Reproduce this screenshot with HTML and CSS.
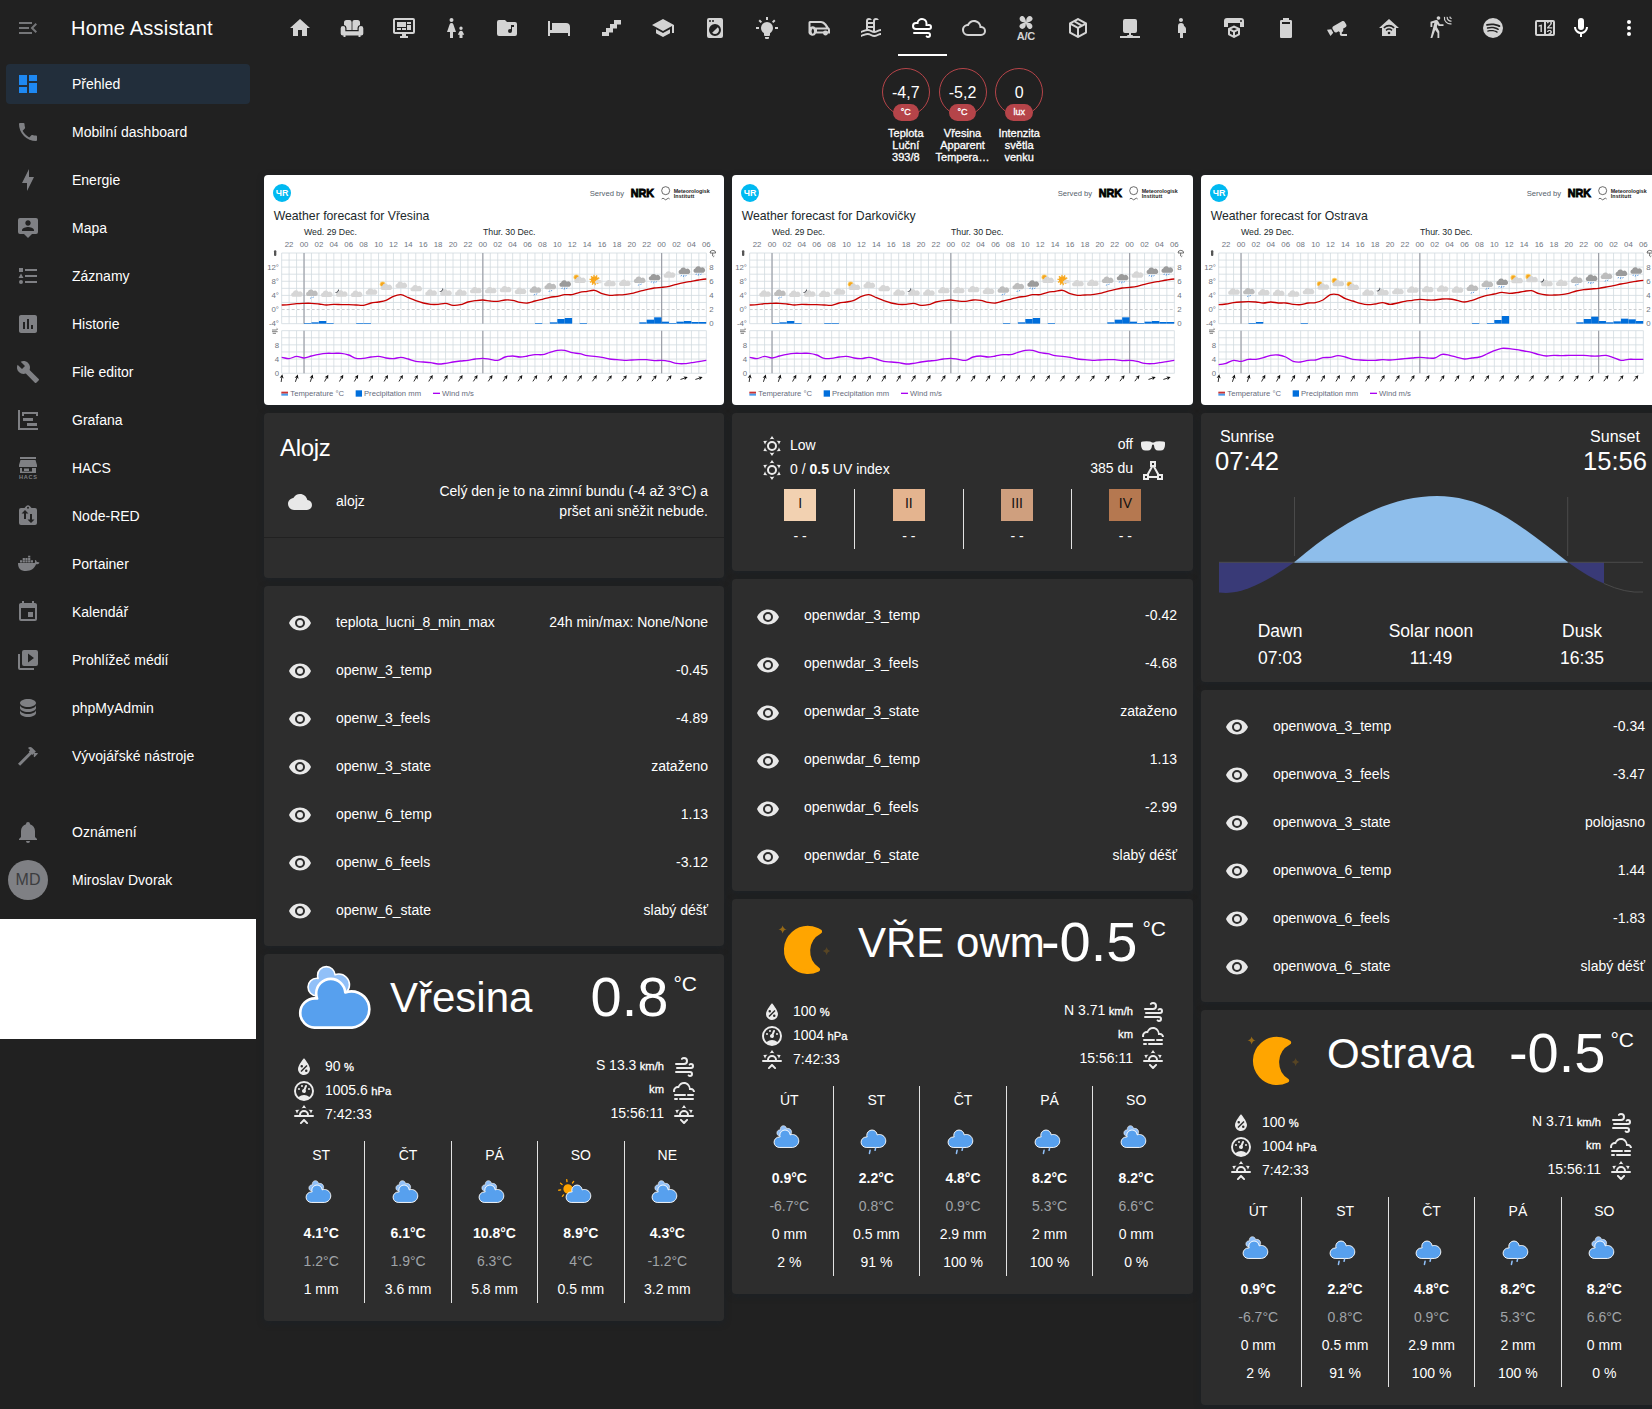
FILE: index.html
```html
<!DOCTYPE html>
<html lang="cs">
<head>
<meta charset="utf-8">
<title>Home Assistant</title>
<link rel="stylesheet" href="styles.css">
</head>
<body>
<svg class="sprite" aria-hidden="true">
<symbol id="menu" viewBox="0 0 24 24"><path d="M21,15.61L19.59,17L14.58,12L19.59,7L21,8.39L17.44,12L21,15.61M3,6H16V8H3V6M3,13V11H13V13H3M3,18V16H16V18H3Z"/></symbol>
<symbol id="dashboard" viewBox="0 0 24 24"><path d="M13,3V9H21V3M13,21H21V11H13M3,21H11V15H3M3,13H11V3H3V13Z"/></symbol>
<symbol id="phone" viewBox="0 0 24 24"><path d="M6.62,10.79C8.06,13.62 10.38,15.94 13.21,17.38L15.41,15.18C15.69,14.9 16.08,14.82 16.43,14.93C17.55,15.3 18.75,15.5 20,15.5A1,1 0 0,1 21,16.5V20A1,1 0 0,1 20,21A17,17 0 0,1 3,4A1,1 0 0,1 4,3H7.5A1,1 0 0,1 8.5,4C8.5,5.25 8.7,6.45 9.07,7.57C9.18,7.92 9.1,8.31 8.82,8.59L6.62,10.79Z"/></symbol>
<symbol id="bolt" viewBox="0 0 24 24"><path d="M11 15H6L13 1V9H18L11 23V15Z"/></symbol>
<symbol id="map" viewBox="0 0 24 24"><path d="M20,2H4A2,2 0 0,0 2,4V16A2,2 0 0,0 4,18H8L12,22L16,18H20A2,2 0 0,0 22,16V4A2,2 0 0,0 20,2M12,4.3C13.5,4.3 14.7,5.5 14.7,7C14.7,8.5 13.5,9.7 12,9.7C10.5,9.7 9.3,8.5 9.3,7C9.3,5.5 10.5,4.3 12,4.3M18,15H6V14.1C6,12.1 10,11 12,11C14,11 18,12.1 18,14.1V15Z"/></symbol>
<symbol id="logbook" viewBox="0 0 24 24"><path d="M5,9.5L7.5,14H2.5L5,9.5M3,4H7V8H3V4M5,20A2,2 0 0,0 7,18A2,2 0 0,0 5,16A2,2 0 0,0 3,18A2,2 0 0,0 5,20M9,5V7H21V5H9M9,19H21V17H9V19M9,13H21V11H9V13Z"/></symbol>
<symbol id="history" viewBox="0 0 24 24"><path d="M19,3H5C3.9,3 3,3.9 3,5V19C3,20.1 3.9,21 5,21H19C20.1,21 21,20.1 21,19V5C21,3.9 20.1,3 19,3M9,17H7V10H9V17M13,17H11V7H13V17M17,17H15V13H17V17Z" fill-rule="evenodd"/></symbol>
<symbol id="wrench" viewBox="0 0 24 24"><path d="M22.7,19L13.6,9.9C14.5,7.6 14,4.9 12.1,3C10.1,1 7.1,0.6 4.7,1.7L9,6L6,9L1.6,4.7C0.4,7.1 0.9,10.1 2.9,12.1C4.8,14 7.5,14.5 9.8,13.6L18.9,22.7C19.3,23.1 19.9,23.1 20.3,22.7L22.6,20.4C23.1,20 23.1,19.3 22.7,19Z"/></symbol>
<symbol id="grafana" viewBox="0 0 24 24"><path d="M2,2H4V20H22V22H2V2M7,10H17V13H7V10M11,15H21V18H11V15M6,4H22V8H20V6H8V8H6V4Z"/></symbol>
<symbol id="hacs" viewBox="0 0 24 24"><path d="M4 1H20V3H4zM4.5 4H19.5L21 9V11H3V9zM4 12H6V15.5H18V12H20V17H4zM8 12.5H13V15H8zM16 12H18V16H16z"/><text x="12" y="23" font-size="5.6" font-weight="bold" text-anchor="middle" textLength="18">HACS</text></symbol>
<symbol id="nodered" viewBox="0 0 24 24"><path fill-rule="evenodd" d="M5 4H8.5L10 2.2A3 3 0 0 1 14 2.2L15.500 4H19A2 2 0 0 1 21 6V19A2 2 0 0 1 19 21H5A2 2 0 0 1 3 19V6A2 2 0 0 1 5 4M12 2.800A1 1 0 0 0 12 4.800A1 1 0 0 0 12 2.800M9 6L5.500 9.500H8V15H10V9.500H12.500zM14 10V15.500H11.500L15 19L18.500 15.500H16V10z"/></symbol>
<symbol id="docker" viewBox="0 0 24 24"><path d="M2 11H18.500C19.300 10.500 19.300 9.500 18.800 8.500L19.500 8C20.500 8.700 20.800 9.500 20.800 10.200C22 10 23 10.200 23.500 10.700C22.800 12 21.500 12.400 20 12.300C18.500 16.500 15 19 10 19C4.500 19 2 16.500 2 11zM4 8.300H6.200V10.400H4zM6.700 8.300H8.900V10.400H6.700zM9.400 8.300H11.600V10.400H9.400zM12.100 8.300H14.300V10.400H12.100zM14.800 8.300H17V10.400H14.800zM6.700 6H8.900V8H6.700zM9.400 6H11.600V8H9.400zM12.100 6H14.300V8H12.100zM12.100 3.700H14.300V5.600H12.100z"/></symbol>
<symbol id="calendar" viewBox="0 0 24 24"><path d="M19,19H5V8H19M16,1V3H8V1H6V3H5C3.89,3 3,3.89 3,5V19A2,2 0 0,0 5,21H19A2,2 0 0,0 21,19V5C21,3.89 20.1,3 19,3H18V1M17,12H12V17H17V12Z"/></symbol>
<symbol id="media" viewBox="0 0 24 24"><path d="M4,6H2V20A2,2 0 0,0 4,22H18V20H4V6M20,2H8A2,2 0 0,0 6,4V16A2,2 0 0,0 8,18H20A2,2 0 0,0 22,16V4A2,2 0 0,0 20,2M12,14.5V5.5L18,10L12,14.5Z"/></symbol>
<symbol id="database" viewBox="0 0 24 24"><path d="M12,3C7.58,3 4,4.79 4,7C4,9.21 7.58,11 12,11C16.42,11 20,9.21 20,7C20,4.79 16.42,3 12,3M4,9V12C4,14.21 7.58,16 12,16C16.42,16 20,14.21 20,12V9C20,11.21 16.42,13 12,13C7.58,13 4,11.21 4,9M4,14V17C4,19.21 7.58,21 12,21C16.42,21 20,19.21 20,17V14C20,16.21 16.42,18 12,18C7.58,18 4,16.21 4,14Z"/></symbol>
<symbol id="hammer" viewBox="0 0 24 24"><path d="M2,19.63L13.43,8.2L12.72,7.5L14.14,6.07L12,3.89C13.2,2.7 15.09,2.7 16.27,3.89L19.87,7.5L18.45,8.91H21.29L22,9.62L18.45,13.21L17.74,12.5V9.62L16.27,11.04L15.56,10.33L4.13,21.76L2,19.63Z"/></symbol>
<symbol id="bell" viewBox="0 0 24 24"><path d="M21,19V20H3V19L5,17V11C5,7.9 7.03,5.17 10,4.29C10,4.19 10,4.1 10,4A2,2 0 0,1 12,2A2,2 0 0,1 14,4C14,4.1 14,4.19 14,4.29C16.97,5.17 19,7.9 19,11V17L21,19M14,21A2,2 0 0,1 12,23A2,2 0 0,1 10,21"/></symbol>
<symbol id="home" viewBox="0 0 24 24"><path d="M10,20V14H14V20H19V12H22L12,3L2,12H5V20H10Z"/></symbol>
<symbol id="sofa" viewBox="0 0 24 24"><path d="M4 9V6.500A2.500 2.500 0 0 1 6.500 4H9.500Q11.600 4 11.600 6V14H6.500V12A3 3 0 0 0 4 9zM12.400 6Q12.400 4 14.500 4H17.500A2.500 2.500 0 0 1 20 6.500V9A3 3 0 0 0 17.500 12V14H12.400zM3 10A2.300 2.300 0 0 1 5.300 12.300V15.300H18.700V12.300A2.300 2.300 0 0 1 23.300 12.300V17.500A2 2 0 0 1 21.300 19.500H20.500V21H18.500V19.500H5.500V21H3.500V19.500H2.700A2 2 0 0 1 .7 17.500V12.300A2.300 2.300 0 0 1 3 10z"/></symbol>
<symbol id="monitor" viewBox="0 0 24 24"><path d="M21,16V4H3V16H21M21,2A2,2 0 0,1 23,4V16A2,2 0 0,1 21,18H14V20H16V22H8V20H10V18H3C1.89,18 1,17.1 1,16V4C1,2.89 1.89,2 3,2H21M5,6H14V11H5V6M15,6H19V8H15V6M19,9V14H15V9H19M5,12H9V14H5V12M10,12H14V14H10V12Z"/></symbol>
<symbol id="girls" viewBox="0 0 24 24"><path d="M7.500 2A2 2 0 1 1 7.500 6A2 2 0 1 1 7.500 2M6 22V16H3L5.600 8.400Q6.100 7 7.500 7Q8.900 7 9.400 8.400L12 16H9V22zM17 10.500A1.700 1.700 0 1 1 17 13.900A1.700 1.700 0 1 1 17 10.500M15.500 22V18.700H13.800L15.400 15.600Q15.900 14.700 17 14.700Q18.100 14.700 18.600 15.600L20.200 18.700H18.500V22z"/></symbol>
<symbol id="music" viewBox="0 0 24 24"><path fill-rule="evenodd" d="M20,6H12L10,4H4A2,2 0 0,0 2,6V18A2,2 0 0,0 4,20H20A2,2 0 0,0 22,18V8A2,2 0 0,0 20,6M19,11H17V15A2,2 0 0,1 15,17A2,2 0 0,1 13,15A2,2 0 0,1 15,13C15.36,13 15.7,13.1 16,13.28V9H19V11Z"/></symbol>
<symbol id="bed" viewBox="0 0 24 24"><path d="M19,7H5V14H3V5H1V20H3V17H21V20H23V11A4,4 0 0,0 19,7"/></symbol>
<symbol id="stairs" viewBox="0 0 24 24"><path d="M15,4V8H11V12H7V16H3V20H10V16.500H14V12.500H18V8.500H22V4H15Z"/></symbol>
<symbol id="school" viewBox="0 0 24 24"><path d="M12,3L1,9L12,15L21,10.09V17H23V9M5,13.18V17.18L12,21L19,17.18V13.18L12,17L5,13.18Z"/></symbol>
<symbol id="washer" viewBox="0 0 24 24"><path d="M14.83,11.17C16.39,12.73 16.39,15.26 14.83,16.83C13.27,18.39 10.74,18.39 9.17,16.83L14.83,11.17M6,2H18A2,2 0 0,1 20,4V20A2,2 0 0,1 18,22H6A2,2 0 0,1 4,20V4A2,2 0 0,1 6,2M7,4A1,1 0 0,0 6,5A1,1 0 0,0 7,6A1,1 0 0,0 8,5A1,1 0 0,0 7,4M10,4A1,1 0 0,0 9,5A1,1 0 0,0 10,6A1,1 0 0,0 11,5A1,1 0 0,0 10,4M12,8A6,6 0 0,0 6,14A6,6 0 0,0 12,20A6,6 0 0,0 18,14A6,6 0 0,0 12,8Z"/></symbol>
<symbol id="bulb" viewBox="0 0 24 24"><path d="M12,6A6,6 0 0,1 18,12C18,14.22 16.79,16.16 15,17.2V19A1,1 0 0,1 14,20H10A1,1 0 0,1 9,19V17.2C7.21,16.16 6,14.22 6,12A6,6 0 0,1 12,6M14,21V22A1,1 0 0,1 13,23H11A1,1 0 0,1 10,22V21H14M20,11H23V13H20V11M1,11H4V13H1V11M13,1V4H11V1H13M4.92,3.5L7.05,5.64L5.63,7.05L3.5,4.93L4.92,3.5M16.95,5.63L19.07,3.5L20.5,4.93L18.37,7.05L16.95,5.63Z"/></symbol>
<symbol id="van" viewBox="0 0 24 24"><path fill-rule="evenodd" d="M3 5H14C17 5 20 8 21.500 11.200Q23 12 23 14V17.500H21A2.600 2.600 0 0 1 16 17.500H9A4 4 0 0 1 1.500 15V6.500Q1.500 5 3 5M3.500 7V11Q6 9.500 8.500 11.500H19Q17 7.500 14 7zM5.800 12.500A2.700 3.200 0 0 0 5.800 17.900A2.700 3.200 0 0 0 5.800 12.500M10 13.500V15.500H16Q18.500 13.500 21 15.500V13.500z"/></symbol>
<symbol id="pool" viewBox="0 0 24 24"><path d="M2,15C3.67,14.25 5.33,13.5 7,13.17V5A3,3 0 0,1 10,2C11.31,2 12.42,2.83 12.83,4H10A1,1 0 0,0 9,5V6H14V5A3,3 0 0,1 17,2C18.31,2 19.42,2.83 19.83,4H17A1,1 0 0,0 16,5V14.94C18,14.62 20,13 22,13V15C19.78,15 17.56,17 15.33,17C13.11,17 10.89,15 8.67,15C6.44,15 4.22,16 2,17V15M14,8H9V10H14V8M14,12H9V13C10.67,13.16 12.33,14.31 14,14.79V12M2,19C4.22,18 6.44,17 8.67,17C10.89,17 13.11,19 15.33,19C17.56,19 19.78,17 22,17V19C19.78,19 17.56,21 15.33,21C13.11,21 10.89,19 8.67,19C6.44,19 4.22,20 2,21V19Z"/></symbol>
<symbol id="windycloud" viewBox="0 0 24 24"><path d="M6,6L6.69,6.06C7.32,3.72 9.46,2 12,2A5.5,5.5 0 0,1 17.5,7.5L17.42,8.45C17.88,8.16 18.42,8 19,8A3,3 0 0,1 22,11A3,3 0 0,1 19,14H6A4,4 0 0,1 2,10A4,4 0 0,1 6,6M6,8A2,2 0 0,0 4,10A2,2 0 0,0 6,12H19A1,1 0 0,0 20,11A1,1 0 0,0 19,10H15.5V7.5A3.5,3.5 0 0,0 12,4A3.5,3.5 0 0,0 8.5,7.5V8H6M18,18H4A1,1 0 0,1 3,17A1,1 0 0,1 4,16H18A3,3 0 0,1 21,19A3,3 0 0,1 18,22C17.17,22 16.42,21.66 15.88,21.12C15.5,20.73 15.5,20.1 15.88,19.71C16.27,19.32 16.9,19.32 17.29,19.71C17.47,19.89 17.72,20 18,20A1,1 0 0,0 19,19A1,1 0 0,0 18,18Z"/></symbol>
<symbol id="cloudline" viewBox="0 0 24 24"><path d="M19,18H6A4,4 0 0,1 2,14A4,4 0 0,1 6,10H6.71C7.37,7.69 9.5,6 12,6A5.5,5.5 0 0,1 17.5,11.5V12H19A3,3 0 0,1 22,15A3,3 0 0,1 19,18M19.35,10.03C18.67,6.59 15.64,4 12,4C9.11,4 6.6,5.64 5.35,8.03C2.34,8.36 0,10.9 0,14A6,6 0 0,0 6,20H19A5,5 0 0,0 24,15C24,12.36 21.95,10.22 19.35,10.03Z"/></symbol>
<symbol id="ac" viewBox="0 0 24 24"><g transform="translate(12,6.500)"><path id="blade" d="M-.8 -1C-4.500 -3 -4 -8 -.5 -8C3 -8 2 -3.500 .8 -1z" transform="rotate(-38)"/><use href="#blade" transform="rotate(90)"/><use href="#blade" transform="rotate(180)"/><use href="#blade" transform="rotate(270)"/><circle r="1.500"/></g><text x="12" y="24" font-size="11" font-weight="bold" text-anchor="middle" textLength="18.500">A/C</text></symbol>
<symbol id="package" viewBox="0 0 24 24"><path d="M21,16.5C21,16.88 20.79,17.21 20.47,17.38L12.57,21.82C12.41,21.94 12.21,22 12,22C11.79,22 11.59,21.94 11.43,21.82L3.53,17.38C3.21,17.21 3,16.88 3,16.5V7.5C3,7.12 3.21,6.79 3.53,6.62L11.43,2.18C11.59,2.06 11.79,2 12,2C12.21,2 12.41,2.06 12.57,2.18L20.47,6.62C20.79,6.79 21,7.12 21,7.5V16.5M12,4.15L10.11,5.22L16,8.61L17.96,7.5L12,4.15M6.04,7.5L12,10.85L13.96,9.75L8.08,6.35L6.04,7.5M5,15.91L11,19.29V12.58L5,9.21V15.91M19,15.91V9.21L13,12.58V19.29L19,15.91Z"/></symbol>
<symbol id="server" viewBox="0 0 24 24"><path d="M7 3H17A2 2 0 0 1 19 5V15A2 2 0 0 1 17 17H13V19H14A1 1 0 0 1 15 20H22V22H2V20H9A1 1 0 0 1 10 19H11V17H7A2 2 0 0 1 5 15V5A2 2 0 0 1 7 3z"/></symbol>
<symbol id="pregnant" viewBox="0 0 24 24"><path d="M9,4C9,2.89 9.89,2 11,2C12.11,2 13,2.89 13,4C13,5.11 12.11,6 11,6C9.89,6 9,5.11 9,4M16,13C16,11.66 15.17,10.5 14,10A3,3 0 0,0 11,7A3,3 0 0,0 8,10V17H10V22H13V17H16V13Z"/></symbol>
<symbol id="printer" viewBox="0 0 24 24"><path d="M19,6A1,1 0 0,0 20,5A1,1 0 0,0 19,4A1,1 0 0,0 18,5A1,1 0 0,0 19,6M19,2A3,3 0 0,1 22,5V11H18V7H6V11H2V5A3,3 0 0,1 5,2H19M18,18.25C18,18.63 17.79,18.96 17.47,19.13L12.57,21.82C12.4,21.94 12.21,22 12,22C11.79,22 11.59,21.94 11.43,21.82L6.53,19.13C6.21,18.96 6,18.63 6,18.25V13C6,12.62 6.21,12.29 6.53,12.12L11.43,9.68C11.59,9.56 11.79,9.5 12,9.5C12.21,9.5 12.4,9.56 12.57,9.68L17.47,12.12C17.79,12.29 18,12.62 18,13V18.25M12,11.65L9.04,13L12,14.6L14.96,13L12,11.65M8,17.66L11,19.29V16.33L8,14.71V17.66M16,17.66V14.71L13,16.33V19.29L16,17.66Z"/></symbol>
<symbol id="battery" viewBox="0 0 24 24"><path fill-rule="evenodd" d="M16.67,4H15V2H9V4H7.33A1.33,1.33 0 0,0 6,5.33V20.67C6,21.4 6.6,22 7.33,22H16.67A1.33,1.33 0 0,0 18,20.67V5.33C18,4.6 17.4,4 16.67,4M16,8H8V6H16z"/></symbol>
<symbol id="cctv" viewBox="0 0 24 24"><path d="M18.15,4.94C17.77,4.91 17.37,5 17,5.2L8.35,10.2C7.39,10.76 7.07,12 7.62,12.94L9.12,15.53C9.67,16.5 10.89,16.82 11.85,16.27L13.65,15.23C13.92,15.69 14.32,16.06 14.81,16.27V18.04C14.81,19.13 15.7,20 16.81,20H22V18.04H16.81V16.27C17.72,15.87 18.31,14.97 18.31,14C18.31,13.54 18.19,13.11 17.97,12.73L20.5,11.27C21.47,10.71 21.8,9.5 21.24,8.53L19.74,5.94C19.4,5.34 18.79,5 18.15,4.94M6.22,13.17L2,13.87L2.75,15.17L4.75,18.63L5.5,19.93L8.22,16.63L6.22,13.17Z"/></symbol>
<symbol id="homewifi" viewBox="0 0 24 24"><path d="M12 3L22 12H19V20H5V12H2z"/><path d="M6.800 11.800Q12 7.500 17.200 11.800M9 14.300Q12 11.800 15 14.300" fill="none" stroke="#212121" stroke-width="1.500"/><circle cx="12" cy="17" r="1.300" fill="#212121"/></symbol>
<symbol id="motion" viewBox="0 0 24 24"><g transform="translate(-4.500,0) scale(1)"><path d="M14.12,10H19V8.2H15.38L13.38,4.87C13.08,4.37 12.54,4.03 11.92,4.03C11.74,4.03 11.58,4.06 11.42,4.11L6,5.8V11H7.8V7.33L9.91,6.67L6,22H7.8L10.67,13.89L13,17V22H14.8V15.59L12.31,11.05L13.04,8.18M14,3.8C15,3.8 15.8,3 15.8,2C15.8,1 15,0.2 14,0.2C13,0.2 12.2,1 12.2,2C12.2,3 13,3.8 14,3.8Z"/></g><path d="M15.500 .8A6 6 0 0 0 22.500 7.800M18.200 .8A3.800 3.800 0 0 0 22.500 5.100M20.800 .6A2 2 0 0 0 22.700 2.500" fill="none" stroke="currentColor" stroke-width="1.200"/></symbol>
<symbol id="spotify" viewBox="0 0 24 24"><path d="M17.9,10.9C14.7,9 9.35,8.8 6.3,9.75C5.8,9.9 5.3,9.6 5.15,9.15C5,8.65 5.3,8.15 5.75,8C9.3,6.95 15.15,7.15 18.85,9.35C19.3,9.6 19.45,10.2 19.2,10.65C18.95,11 18.35,11.15 17.9,10.9M17.8,13.7C17.55,14.05 17.1,14.2 16.75,13.95C14.05,12.3 9.95,11.8 6.8,12.8C6.4,12.9 5.95,12.7 5.85,12.3C5.75,11.9 5.95,11.45 6.35,11.35C10,10.25 14.5,10.8 17.6,12.7C17.9,12.85 18.05,13.35 17.8,13.7M16.6,16.45C16.4,16.75 16.05,16.85 15.75,16.65C13.4,15.2 10.45,14.9 6.95,15.7C6.6,15.8 6.3,15.55 6.2,15.25C6.1,14.9 6.35,14.6 6.65,14.5C10.45,13.65 13.75,14 16.35,15.6C16.7,15.75 16.75,16.15 16.6,16.45M12,2A10,10 0 0,0 2,12A10,10 0 0,0 12,22A10,10 0 0,0 22,12A10,10 0 0,0 12,2Z"/></symbol>
<symbol id="counter" viewBox="0 0 24 24"><path d="M4,4H20A2,2 0 0,1 22,6V18A2,2 0 0,1 20,20H4A2,2 0 0,1 2,18V6A2,2 0 0,1 4,4M4,6V18H11V6H4M20,18V6H18.76C19,6.54 18.95,7.07 18.95,7.13C18.88,7.8 18.41,8.5 18.24,8.75L15.91,11.3L19.23,11.28L19.24,12.5L14.04,12.47L14,11.47C14,11.47 17.05,8.24 17.2,7.95C17.34,7.67 17.91,6 16.5,6C15.27,6.05 15.41,7.3 15.41,7.3L13.87,7.31C13.87,7.31 13.88,6.65 14.25,6H13V18H15.58L15.57,17.14L16.54,17.13C16.54,17.13 17.45,16.97 17.46,16.08C17.5,15.08 16.65,15.08 16.5,15.08C16.37,15.08 15.43,15.13 15.43,15.95H13.91C13.91,15.95 13.95,13.89 16.5,13.89C19.1,13.89 18.96,15.91 18.96,15.91C18.96,15.91 19,17.16 17.85,17.63L18.37,18H20M8.92,16H7.42V10.2L5.62,10.76V9.53L8.76,8.41H8.92V16Z"/></symbol>
<symbol id="mic" viewBox="0 0 24 24"><path d="M12,2A3,3 0 0,1 15,5V11A3,3 0 0,1 12,14A3,3 0 0,1 9,11V5A3,3 0 0,1 12,2M19,11C19,14.53 16.39,17.44 13,17.93V21H11V17.93C7.61,17.44 5,14.53 5,11H7A5,5 0 0,0 12,16A5,5 0 0,0 17,11H19Z"/></symbol>
<symbol id="dots" viewBox="0 0 24 24"><circle cx="12" cy="6" r="2"/><circle cx="12" cy="12" r="2"/><circle cx="12" cy="18" r="2"/></symbol>
<symbol id="eye" viewBox="0 0 24 24"><path d="M12,9A3,3 0 0,0 9,12A3,3 0 0,0 12,15A3,3 0 0,0 15,12A3,3 0 0,0 12,9M12,17A5,5 0 0,1 7,12A5,5 0 0,1 12,7A5,5 0 0,1 17,12A5,5 0 0,1 12,17M12,4.5C7,4.5 2.73,7.61 1,12C2.73,16.39 7,19.5 12,19.5C17,19.5 21.27,16.39 23,12C21.27,7.61 17,4.5 12,4.5Z"/></symbol>
<symbol id="cloud" viewBox="0 0 24 24"><path d="M19.35,10.03C18.67,6.59 15.64,4 12,4C9.11,4 6.6,5.64 5.35,8.03C2.34,8.36 0,10.9 0,14A6,6 0 0,0 6,20H19A5,5 0 0,0 24,15C24,12.36 21.95,10.22 19.35,10.03Z"/></symbol>
<symbol id="sunny" viewBox="0 0 24 24"><path d="M12,7A5,5 0 0,1 17,12A5,5 0 0,1 12,17A5,5 0 0,1 7,12A5,5 0 0,1 12,7M12,9A3,3 0 0,0 9,12A3,3 0 0,0 12,15A3,3 0 0,0 15,12A3,3 0 0,0 12,9M12,2L14.39,5.42C13.65,5.15 12.84,5 12,5C11.16,5 10.35,5.15 9.61,5.42L12,2M3.34,7L7.5,6.65C6.9,7.16 6.36,7.78 5.94,8.5C5.5,9.24 5.25,10 5.11,10.79L3.34,7M3.36,17L5.12,13.23C5.26,14 5.53,14.78 5.95,15.5C6.37,16.24 6.91,16.86 7.5,17.37L3.36,17M20.65,7L18.88,10.79C18.74,10 18.47,9.23 18.05,8.5C17.63,7.78 17.1,7.15 16.5,6.64L20.65,7M20.64,17L16.5,17.36C17.09,16.85 17.62,16.22 18.04,15.5C18.46,14.77 18.73,14 18.87,13.21L20.64,17M12,22L9.59,18.56C10.33,18.83 11.14,19 12,19C12.82,19 13.63,18.83 14.37,18.56L12,22Z"/></symbol>
<symbol id="glasses" viewBox="0 0 24 24"><path d="M0 8.500Q.2 7.500 2 7.400Q5.500 7 9 7.400Q10.500 7.600 11 8.600H13Q13.500 7.600 15 7.400Q18.500 7 22 7.400Q23.800 7.500 24 8.500V11Q23.800 16.500 19.500 16.500H17Q13.500 16.500 13 11.500Q12.800 10.600 12 10.600Q11.200 10.600 11 11.500Q10.500 16.500 7 16.500H4.500Q.2 16.500 0 11z"/></symbol>
<symbol id="triangle" viewBox="0 0 24 24"><path d="M9,3V9H9.73L5.79,16H2V22H8V20H16V22H22V16H18.21L14.27,9H15V3M11,5H13V7H11M12,9.04L16,16.15V18H8V16.15M4,18H6V20H4M18,18H20V20H18" fill-rule="evenodd"/></symbol>
<symbol id="humidity" viewBox="0 0 24 24"><path d="M12,3.25C12,3.25 6,10 6,14C6,17.32 8.69,20 12,20A6,6 0 0,0 18,14C18,10 12,3.25 12,3.25M14.47,9.97L15.53,11.03L9.53,17.03L8.47,15.97M9.75,10A1.25,1.25 0 0,1 11,11.25A1.25,1.25 0 0,1 9.75,12.5A1.25,1.25 0 0,1 8.5,11.25A1.25,1.25 0 0,1 9.75,10M14.25,14.5A1.25,1.25 0 0,1 15.5,15.75A1.25,1.25 0 0,1 14.25,17A1.25,1.25 0 0,1 13,15.75A1.25,1.25 0 0,1 14.25,14.5Z" fill-rule="evenodd"/></symbol>
<symbol id="gauge" viewBox="0 0 24 24"><path d="M12,2A10,10 0 0,0 2,12A10,10 0 0,0 12,22A10,10 0 0,0 22,12A10,10 0 0,0 12,2M12,4A8,8 0 0,1 20,12C20,14.4 19,16.5 17.3,18C15.9,16.7 14,16 12,16C10,16 8.2,16.7 6.7,18C5,16.5 4,14.4 4,12A8,8 0 0,1 12,4M14,5.89C13.62,5.9 13.26,6.15 13.1,6.54L11.81,9.77L11.71,10C11,10.13 10.41,10.6 10.14,11.26C9.73,12.29 10.23,13.45 11.26,13.86C12.29,14.27 13.45,13.77 13.86,12.74C14.12,12.08 14,11.32 13.57,10.76L13.67,10.5L14.96,7.29L14.97,7.26C15.17,6.75 14.92,6.17 14.41,5.96C14.28,5.91 14.15,5.89 14,5.89M10,6A1,1 0 0,0 9,7A1,1 0 0,0 10,8A1,1 0 0,0 11,7A1,1 0 0,0 10,6M7,9A1,1 0 0,0 6,10A1,1 0 0,0 7,11A1,1 0 0,0 8,10A1,1 0 0,0 7,9M17,9A1,1 0 0,0 16,10A1,1 0 0,0 17,11A1,1 0 0,0 18,10A1,1 0 0,0 17,9Z" fill-rule="evenodd"/></symbol>
<symbol id="sunbase" viewBox="0 0 24 24"><path fill-rule="evenodd" d="M3,12H7A5,5 0 0,1 12,7A5,5 0 0,1 17,12H21A1,1 0 0,1 22,13A1,1 0 0,1 21,14H3A1,1 0 0,1 2,13A1,1 0 0,1 3,12M15,12A3,3 0 0,0 12,9A3,3 0 0,0 9,12H15M12,2L14.39,5.42C13.65,5.15 12.84,5 12,5C11.16,5 10.35,5.15 9.61,5.42L12,2M3.34,7L7.5,6.65C6.9,7.16 6.36,7.78 5.94,8.5C5.5,9.24 5.25,10 5.11,10.79L3.34,7M20.65,7L18.88,10.79C18.74,10 18.47,9.23 18.05,8.5C17.63,7.78 17.1,7.15 16.5,6.64L20.65,7"/></symbol>
<symbol id="sunup" viewBox="0 0 24 24"><use href="#sunbase" width="24" height="24"/><path d="M12.71,16.3L15.82,19.41C16.21,19.8 16.21,20.43 15.82,20.82C15.43,21.21 14.8,21.21 14.41,20.82L12,18.41L9.59,20.82C9.2,21.21 8.57,21.21 8.18,20.82C7.79,20.43 7.79,19.8 8.18,19.41L11.29,16.3C11.5,16.1 11.74,16 12,16C12.26,16 12.5,16.1 12.71,16.3Z"/></symbol>
<symbol id="sundown" viewBox="0 0 24 24"><use href="#sunbase" width="24" height="24"/><path d="M12.71,20.71L15.82,17.6C16.21,17.21 16.21,16.57 15.82,16.18C15.43,15.79 14.8,15.79 14.41,16.18L12,18.59L9.59,16.18C9.2,15.79 8.57,15.79 8.18,16.18C7.79,16.57 7.79,17.21 8.18,17.6L11.29,20.71C11.5,20.9 11.74,21 12,21C12.26,21 12.5,20.9 12.71,20.71Z"/></symbol>
<symbol id="wind" viewBox="0 0 24 24"><path d="M4,10A1,1 0 0,1 3,9A1,1 0 0,1 4,8H12A2,2 0 0,0 14,6A2,2 0 0,0 12,4C11.45,4 10.95,4.22 10.59,4.59C10.2,5 9.56,5 9.17,4.59C8.78,4.2 8.78,3.56 9.17,3.17C9.9,2.45 10.9,2 12,2A4,4 0 0,1 16,6A4,4 0 0,1 12,10H4M19,12A1,1 0 0,0 20,11A1,1 0 0,0 19,10C18.72,10 18.47,10.11 18.29,10.29C17.9,10.68 17.27,10.68 16.88,10.29C16.5,9.9 16.5,9.27 16.88,8.88C17.42,8.34 18.17,8 19,8A3,3 0 0,1 22,11A3,3 0 0,1 19,14H5A1,1 0 0,1 4,13A1,1 0 0,1 5,12H19M18,18H4A1,1 0 0,1 3,17A1,1 0 0,1 4,16H18A3,3 0 0,1 21,19A3,3 0 0,1 18,22C17.17,22 16.42,21.66 15.88,21.12C15.5,20.73 15.5,20.1 15.88,19.71C16.27,19.32 16.9,19.32 17.29,19.71C17.47,19.89 17.72,20 18,20A1,1 0 0,0 19,19A1,1 0 0,0 18,18Z"/></symbol>
<symbol id="fog" viewBox="0 0 24 24"><path d="M3,15H13A1,1 0 0,1 14,16A1,1 0 0,1 13,17H3A1,1 0 0,1 2,16A1,1 0 0,1 3,15M16,15H21A1,1 0 0,1 22,16A1,1 0 0,1 21,17H16A1,1 0 0,1 15,16A1,1 0 0,1 16,15M1,12A5,5 0 0,1 6,7C7,4.65 9.3,3 12,3C15.43,3 18.24,5.66 18.5,9.03L19,9C21.19,9 22.97,10.76 23,13H21A2,2 0 0,0 19,11H17V10A5,5 0 0,0 12,5C9.5,5 7.45,6.82 7.06,9.19C6.73,9.07 6.37,9 6,9A3,3 0 0,0 3,12C3,12.35 3.06,12.69 3.17,13H1.1L1,12M3,19H5A1,1 0 0,1 6,20A1,1 0 0,1 5,21H3A1,1 0 0,1 2,20A1,1 0 0,1 3,19M8,19H21A1,1 0 0,1 22,20A1,1 0 0,1 21,21H8A1,1 0 0,1 7,20A1,1 0 0,1 8,19Z"/></symbol>
<path id="cloudshape" stroke="#fff" stroke-width="1.200" stroke-linejoin="round" d="M47.7,35.4c0-4.6-3.7-8.2-8.2-8.2c-1,0-1.9,0.2-2.8,0.5c-0.3-3.4-3.1-6.2-6.6-6.2c-3.7,0-6.7,3-6.7,6.7c0,0.8,0.2,1.6,0.4,2.3c-0.3-0.1-0.7-0.1-1-0.1c-3.7,0-6.7,3-6.7,6.7c0,3.6,2.9,6.6,6.5,6.7l17.2,0C44.2,43.3,47.7,39.8,47.7,35.4z"/>
<symbol id="w-cloudy" viewBox="0 0 64 64"><g fill="#91c0f8"><use href="#cloudshape" transform="translate(10,2) scale(.6)"/></g><g fill="#57a0ee"><use href="#cloudshape" y="-1"/></g></symbol>
<symbol id="w-rain" viewBox="0 0 64 64"><g fill="#57a0ee"><use href="#cloudshape" y="-1"/></g><path d="M27.600 46.500L26.800 50.500M34.600 44L34 46.500" stroke="#91c0f8" stroke-width="2" stroke-linecap="round"/></symbol>
<symbol id="w-partly" viewBox="0 0 64 64"><g transform="translate(18.600,25.500) rotate(-8)"><circle r="6" fill="orange"/><path d="M0 -9.500V-12M0 9.500V12M-9.500 0H-12M6.700 -6.700L8.500 -8.500M-6.700 -6.700L-8.500 -8.500M-6.700 6.700L-8.500 8.500" stroke="orange" stroke-width="1.700" stroke-linecap="round"/></g><g fill="#57a0ee"><use href="#cloudshape" y="-1"/></g></symbol>
<symbol id="w-moon" viewBox="0 0 64 64"><g fill="orange"><path transform="translate(19.800,19.200) rotate(3 14 13)" stroke="orange" stroke-width="2" stroke-linejoin="round" d="M14.5,13.2c0-3.7,2-6.9,5-8.7c-1.5-0.9-3.2-1.3-5-1.3c-5.5,0-10,4.5-10,10s4.500,10,10,10c1.8,0,3.5-0.500,5-1.300C16.5,20.2,14.5,16.9,14.5,13.2z"/><path opacity=".5" d="M22.700 21.200Q23.100 22.800 24.500 23Q23.100 23.300 22.700 24.900Q22.300 23.300 20.800 23Q22.300 22.700 22.700 21.200z"/><path opacity=".2" d="M42.800 31.100Q43.200 32.700 44.600 32.900Q43.200 33.200 42.800 34.800Q42.400 33.200 40.900 32.900Q42.400 32.600 42.800 31.100z"/></g></symbol>
</svg>

<div class="app">
  <aside class="sidebar">
    <div class="brand"><svg class="icon"><use href="#menu"/></svg><span>Home Assistant</span></div>
    <nav id="nav"></nav>
    <div class="filler"></div>
  </aside>
  <main class="main">
    <header class="toolbar">
      <div class="tabs" id="tabs"></div>
      <svg class="icon mic"><use href="#mic"/></svg>
      <svg class="icon more"><use href="#dots"/></svg>
    </header>
    <section class="badges">
      <div class="badge"><div class="ring"><span>-4,7</span><em>°C</em></div><p>Teplota<br>Luční<br>393/8</p></div>
      <div class="badge"><div class="ring"><span>-5,2</span><em>°C</em></div><p>Vřesina<br>Apparent<br>Tempera…</p></div>
      <div class="badge"><div class="ring"><span>0</span><em>lux</em></div><p>Intenzita<br>světla<br>venku</p></div>
    </section>
    <div class="columns">
      <div class="column">
        <div class="card chart" data-chart="vresina"></div>
        <div class="card alojz">
          <h2>Alojz</h2>
          <div class="row"><svg class="icon"><use href="#cloud"/></svg><span>alojz</span><b>Celý den je to na zimní bundu (-4 až 3°C) a pršet ani sněžit nebude.</b></div>
          <div class="foot"></div>
        </div>
        <div class="card list" data-list="vresina"></div>
        <div class="card weather" data-weather="vresina"></div>
      </div>
      <div class="column">
        <div class="card chart" data-chart="darkovicky"></div>
        <div class="card uv">
          <div class="attrs">
            <div><p><svg class="icon"><use href="#sunny"/></svg>Low</p><p><svg class="icon"><use href="#sunny"/></svg><span>0 / <strong>0.5</strong> UV index</span></p></div>
            <div class="right"><p>off<svg class="icon"><use href="#glasses"/></svg></p><p>385 du<svg class="icon"><use href="#triangle"/></svg></p></div>
          </div>
          <div class="skins">
            <div><i class="skin s1">I</i>- -</div><div><i class="skin s2">II</i>- -</div><div><i class="skin s3">III</i>- -</div><div><i class="skin s4">IV</i>- -</div>
          </div>
        </div>
        <div class="card list low" data-list="darkovicky"></div>
        <div class="card weather" data-weather="vre"></div>
      </div>
      <div class="column">
        <div class="card chart" data-chart="ostrava"></div>
        <div class="card sun">
          <div class="suntop"><div>Sunrise<b>07:42</b></div><div>Sunset<b>15:56</b></div></div>
          <svg class="sungraph" width="426" height="100" viewBox="1219 494 426 100">
            <path d="M1219 562H1294.500C1275 576 1248 593 1226 593L1219 592.500z" fill="#393a77"/>
            <path d="M1567.700 562H1604V583.500Q1588 577 1567.700 562z" fill="#393a77"/>
            <path d="M1294.500 562C1345 519 1391 496 1437 496C1483 496 1517 522 1567.700 562z" fill="#8ebeeb"/>
            <path d="M1294.500 497V556M1567.700 497V556M1219 562.300H1643M1604 583.500Q1626 593.500 1643 592" fill="none" stroke="#4a4a4a"/>
            <path d="M1294.500 562.300H1567.700" stroke="#7da5cb"/>
          </svg>
          <div class="sunbottom"><div>Dawn<b>07:03</b></div><div>Solar noon<b>11:49</b></div><div>Dusk<b>16:35</b></div></div>
        </div>
        <div class="card list" data-list="ostrava"></div>
        <div class="card weather" data-weather="ostrava"></div>
      </div>
    </div>
  </main>
</div>
<script src="app.js"></script>
</body>
</html>
```
FILE: styles.css
```css
* { box-sizing: border-box; }
html, body { margin: 0; height: 1409px; overflow: hidden; }
body { background: #212121; color: #fff; font: 14px/20px "Liberation Sans", Arial, sans-serif; }
p, h2 { margin: 0; }
b { font-weight: 400; }
.sprite { display: none; }
.icon { width: 24px; height: 24px; fill: currentColor; flex: none; display: block; overflow: visible; }
.app { display: flex; width: 1652px; height: 1409px; overflow: hidden; }

.sidebar { width: 256px; flex: none; }
.brand { height: 56px; display: flex; align-items: center; gap: 31px; padding-left: 16px; font-size: 20px; letter-spacing: .2px; }
.brand .icon { color: #757679; }
.nav-item { height: 40px; margin: 8px 6px; padding-left: 10px; display: flex; align-items: center; gap: 32px; border-radius: 4px; }
.nav-item .icon { color: #7f8084; }
.nav-item.active { background: #222e3b; }
.nav-item.active .icon { color: #1e88f2; }
.nav-item.spaced { margin-top: 36px; }
.avatar { width: 40px; height: 40px; margin: 0 -8px; border-radius: 50%; background: #7f8084; color: #3c3d40; display: flex; align-items: center; justify-content: center; font-size: 16px; }
.filler { height: 120px; margin-top: 11px; background: #fff; }
#nav { overflow: hidden; }

.main { width: 1396px; flex: none; }
.toolbar { height: 56px; display: flex; align-items: center; padding-left: 18px; }
.tabs { display: flex; height: 56px; width: 1296.700px; }
.tab { flex: 1; margin: 0 1.700px; display: flex; align-items: center; justify-content: center; color: #d3d3d3; border-bottom: 2px solid transparent; padding-top: 2px; }
.tab.active { color: #fff; border-color: #fff; }
.mic { margin-left: -2px; }
.more { margin-left: 24px; }

.badges { height: 119px; padding: 12px 0 0 17px; display: flex; justify-content: center; }
.badge { width: 56.700px; text-align: center; font-size: 11px; line-height: 12px; white-space: nowrap; }
.badge p, .badge em, .attrs small { -webkit-text-stroke: .3px currentColor; }
.ring { width: 48px; height: 48px; margin: 0 auto 11px; border: 1px solid #b54449; border-radius: 50%; display: flex; flex-direction: column; align-items: center; }
.ring span { font-size: 16px; line-height: 16px; margin-top: 16px; }
.ring em { flex: none; font: 9px/17px "Liberation Sans", Arial, sans-serif; margin-top: 3px; padding: 0 8px; background: #b54449; border-radius: 9px; }

.columns { display: grid; grid-template-columns: 460px 461px 460px; gap: 8px; margin-left: 8px; align-items: start; }
.column { display: grid; grid-template-columns: minmax(0, 1fr); gap: 8px; }
.card { background: #2d2d2d; border-radius: 4px; box-shadow: 0 2px 6px rgba(24, 34, 44, .5); }
.chart { background: #fff; height: 230px; overflow: hidden; }
.chart svg { display: block; }

.alojz { height: 165px; }
.alojz h2 { font: 24px/36px "Liberation Sans", Arial, sans-serif; letter-spacing: -.3px; padding: 17px 16px 0; height: 68px; }
.row { display: flex; align-items: center; height: 40px; padding: 0 16px; }
.row .icon { margin: 2px 24px 0 8px; color: #e8e8e8; }
.row b { margin-left: auto; text-align: right; }
.alojz b { width: 280px; }
.alojz .foot { margin-top: 16px; border-top: 1px solid #212121; }

.list { padding: 16px 0; display: grid; gap: 8px; }
.list.low .icon { margin-top: 4px; }

.attrs { display: flex; justify-content: space-between; padding: 0 14px; }
.attrs p { display: flex; align-items: center; height: 24px; gap: 9px; }
.attrs .icon { color: #ececec; margin-top: 2px; }
.attrs small { font-size: 11.200px; margin-left: -.5px; }
.attrs .right p { justify-content: flex-end; gap: 8px; }
.attrs .right { margin-top: -1px; }
.attrs .right .icon { margin-top: 4px; }

.uv { height: 158px; padding: 20px 14px 0; }
.uv .attrs .icon { margin-right: -3px; }
.uv .attrs .right .icon { margin-right: 0; }
.skins { display: grid; grid-template-columns: repeat(4, 1fr); margin-top: 8px; height: 60px; text-align: center; }
.skins div + div { border-left: 1px solid #e2e2e2; }
.skin { display: block; width: 32px; height: 32px; margin: 0 auto 5px; font-style: normal; line-height: 28px; color: #111; }
.s1 { background: #f2d1b1; }
.s2 { background: #e4b48f; }
.s3 { background: #cf9f7e; }
.s4 { background: #b57850; }

.sun { height: 269px; padding-top: 14px; text-align: center; }
.sun b { display: block; }
.suntop { display: flex; justify-content: space-between; padding: 0 14px; font-size: 16px; }
.suntop b { font-size: 25.600px; line-height: 28px; }
.sungraph { display: block; margin: 19px 0 0 18px; }
.sunbottom { display: grid; grid-template-columns: repeat(3, 151px); padding-left: 3.500px; margin-top: 24px; font-size: 17.500px; line-height: 27px; }

.weather { padding: 0 14px 18px; }
.w-head { display: flex; height: 100px; }
.w-icon { width: 140px; height: 140px; margin: -20px 0 0 -13px; flex: none; }
.w-name { flex: 1 1 0; min-width: 0; margin: 20px 0 0 -15px; font-size: 42px; line-height: 48px; white-space: nowrap; }
.w-temp { margin-top: 12px; font-size: 56px; line-height: 62px; flex: none; }
.w-unit { margin: 18px 13px 0 5px; font-size: 21px; line-height: 24px; flex: none; }
.days { display: grid; grid-template-columns: repeat(5, 1fr); margin-top: 15px; text-align: center; line-height: 28px; }
.days > div + div { border-left: 1px solid #e2e2e2; }
.days svg { display: block; width: 50px; height: 50px; margin: 0 auto; transform: translateX(-2.500px); }
.days .hi { font-weight: 700; }
.days .lo { color: #a0a4a8; }
```
FILE: app.js
```js
const $ = (s) => document.querySelector(s);
const icon = (n) => `<svg class="icon"><use href="#${n}"/></svg>`;

$('#nav').innerHTML = [
  ['dashboard', 'Přehled', 'active'], ['phone', 'Mobilní dashboard'], ['bolt', 'Energie'], ['map', 'Mapa'],
  ['logbook', 'Záznamy'], ['history', 'Historie'], ['wrench', 'File editor'], ['grafana', 'Grafana'],
  ['hacs', 'HACS'], ['nodered', 'Node-RED'], ['docker', 'Portainer'], ['calendar', 'Kalendář'],
  ['media', 'Prohlížeč médií'], ['database', 'phpMyAdmin'], ['hammer', 'Vývojářské nástroje'],
  ['bell', 'Oznámení', 'spaced'], ['', 'Miroslav Dvorak'],
].map(([i, t, c]) => `<div class="nav-item ${c || ''}">${i ? icon(i) : '<span class="avatar">MD</span>'}<span>${t}</span></div>`).join('');

$('#tabs').innerHTML = ('home sofa monitor girls music bed stairs school washer bulb van pool windycloud cloudline ac package ' +
  'server pregnant printer battery cctv homewifi motion spotify counter').split(' ')
  .map((n) => `<div class="tab ${n === 'windycloud' ? 'active' : ''}">${icon(n)}</div>`).join('');

const lists = {
  vresina: [['teplota_lucni_8_min_max', '24h min/max: None/None'], ['openw_3_temp', '-0.45'], ['openw_3_feels', '-4.89'],
    ['openw_3_state', 'zataženo'], ['openw_6_temp', '1.13'], ['openw_6_feels', '-3.12'], ['openw_6_state', 'slabý déšť']],
  darkovicky: [['openwdar_3_temp', '-0.42'], ['openwdar_3_feels', '-4.68'], ['openwdar_3_state', 'zataženo'],
    ['openwdar_6_temp', '1.13'], ['openwdar_6_feels', '-2.99'], ['openwdar_6_state', 'slabý déšť']],
  ostrava: [['openwova_3_temp', '-0.34'], ['openwova_3_feels', '-3.47'], ['openwova_3_state', 'polojasno'],
    ['openwova_6_temp', '1.44'], ['openwova_6_feels', '-1.83'], ['openwova_6_state', 'slabý déšť']],
};
document.querySelectorAll('[data-list]').forEach((el) => {
  el.innerHTML = lists[el.dataset.list].map(([k, v]) => `<div class="row">${icon('eye')}<span>${k}</span><b>${v}</b></div>`).join('');
});

const owmDays = [
  ['ÚT', 'cloudy', '0.9', '-6.7', '0', '2'], ['ST', 'rain', '2.2', '0.8', '0.5', '91'], ['ČT', 'rain', '4.8', '0.9', '2.9', '100'],
  ['PÁ', 'rain', '8.2', '5.3', '2', '100'], ['SO', 'cloudy', '8.2', '6.6', '0', '0'],
];
const weather = {
  vresina: { icon: 'cloudy', name: 'Vřesina', temp: '0.8', hum: '90', hpa: '1005.6', wind: 'S 13.3', days: [
    ['ST', 'cloudy', '4.1', '1.2', '1'], ['ČT', 'cloudy', '6.1', '1.9', '3.6'], ['PÁ', 'cloudy', '10.8', '6.3', '5.8'],
    ['SO', 'partly', '8.9', '4', '0.5'], ['NE', 'cloudy', '4.3', '-1.2', '3.2']] },
  vre: { icon: 'moon', name: 'VŘE owm', temp: '-0.5', hum: '100', hpa: '1004', wind: 'N 3.71', days: owmDays },
  ostrava: { icon: 'moon', name: 'Ostrava', temp: '-0.5', hum: '100', hpa: '1004', wind: 'N 3.71', days: owmDays },
};
document.querySelectorAll('[data-weather]').forEach((el) => {
  const w = weather[el.dataset.weather];
  el.innerHTML = `<div class="w-head"><svg class="w-icon"><use href="#w-${w.icon}"/></svg><div class="w-name">${w.name}</div>
    <div class="w-temp">${w.temp}</div><div class="w-unit">°C</div></div>
    <div class="attrs"><div><p>${icon('humidity')}<span>${w.hum} <small>%</small></span></p>
    <p>${icon('gauge')}<span>${w.hpa} <small>hPa</small></span></p><p>${icon('sunup')}7:42:33</p></div>
    <div class="right"><p><span>${w.wind} <small>km/h</small></span>${icon('wind')}</p>
    <p><small>km</small>${icon('fog')}</p><p>15:56:11${icon('sundown')}</p></div></div>
    <div class="days">${w.days.map(([d, i, hi, lo, mm, pc]) => `<div>${d}<svg><use href="#w-${i}"/></svg>
      <div class="hi">${hi}°C</div><div class="lo">${lo}°C</div><div>${mm} mm</div>${pc ? `<div>${pc} %</div>` : ''}</div>`).join('')}</div>`;
});

// Meteogram: series hold one vertical position per hour, three drawing units to a pixel.
// Sky letters: c cloud, n night cloud, s sun and cloud, S sun, r light rain, d heavy rain.
const seriesA = {
  temp: [405,404,401,400,400,402,405,403,404,404,405,406,399,396,391,379,374,383,392,399,403,403,400,406,404,396,392,390,393,394,390,391,397,399,393,388,382,379,374,374,367,364,361,371,376,375,374,370,364,359,354,352,349,343,338,334,330,327],
  wind: [562,566,559,564,558,553,550,550,550,555,565,565,561,559,564,566,562,567,574,576,578,582,580,576,573,571,567,565,568,571,561,558,561,558,554,554,547,541,541,548,551,557,559,562,567,569,571,570,569,569,572,571,574,580,581,578,575,571],
  rain: {3:2,4:4,5:8,6:2,10:2,11:2,34:2,36:4,37:14,38:17,40:2,48:4,49:12,50:19,51:6,52:2,53:6,54:8,55:5,56:5},
  sky: 'crcnccsccc' + 'nccccc' + 'rrdsSccrdcdd',
  skyY: [370,368,371,370,371,364,350,344,354,367,367,367,360,360,357,362,358,348,340,329,330,339,338,329,321,313,302,298],
};
const seriesB = {
  temp: [404,402,398,396,395,396,399,396,399,399,403,404,399,398,390,374,374,386,393,400,404,402,398,403,399,394,391,388,390,390,387,387,391,396,391,383,376,372,367,370,368,364,362,371,375,375,374,370,363,359,357,355,351,347,342,338,334,331],
  wind: [584,580,571,574,568,568,563,556,555,561,574,576,571,570,563,562,557,561,568,570,571,571,569,570,568,566,564,562,564,564,553,556,562,567,564,561,552,542,535,536,539,543,547,554,558,556,557,556,556,556,558,558,556,563,571,568,568,568],
  rain: {4:2,5:5,11:2,34:2,36:2,37:11,38:23,48:4,49:14,50:21,51:8,52:4,53:7,54:15,55:13,56:8},
  sky: 'crccccsssc' + 'nccccc' + 'rrdssncrdrdd',
  skyY: [364,363,366,368,370,363,349,339,350,367,366,363,358,357,355,358,353,341,335,330,327,339,338,329,323,317,308,301],
};
const charts = { vresina: ['Vřesina', seriesA], darkovicky: ['Darkovičky', seriesA], ostrava: ['Ostrava', seriesB] };
const X0 = 65, STEP = 22.35;
const px = (i) => +(X0 + i * STEP).toFixed(1);

function smooth(ys) {
  let d = `M${px(0)} ${ys[0]}`;
  for (let i = 1; i < ys.length; i++) {
    const p = ys[i - 2] ?? ys[i - 1], n = ys[i + 1] ?? ys[i];
    d += `C${px(i - .67)} ${(ys[i - 1] + (ys[i] - p) / 6).toFixed(1)} ${px(i - .33)} ${(ys[i] - (n - ys[i - 1]) / 6).toFixed(1)} ${px(i)} ${ys[i]}`;
  }
  return d;
}
const puff = (c) => `<path d="M-12 10A6.500 6.500 0 0 1 -11 -2.500A9.500 9.500 0 0 1 6 -5A7.500 7.500 0 0 1 14 10z" fill="${c}"/>`;
function sky(type, x, y) {
  let s = '';
  if (type === 's') s = '<circle cx="-10" cy="-7" r="8.500" fill="#fcd06a"/><circle cx="-10" cy="-7" r="6" fill="#f6a51c"/>';
  if (type === 'S') s = '<circle r="13" fill="none" stroke="#f6b030" stroke-width="5" stroke-dasharray="4 4"/><circle r="11" fill="#f9a61b"/>';
  if (type === 'n') s = '<path d="M-9 -14A9 9 0 0 1 -19 -4A8 8 0 0 0 -8 -4A8 8 0 0 0 -9 -14" fill="#4c5057"/>';
  if (type === 'S') s += `<g transform="translate(11,4) scale(.6)">${puff('#dedede')}</g>`;
  else s += puff({ r: '#bdbdbd', d: '#9b9b9b' }[type] || '#d6d6d6');
  if (type === 'r') s += '<path d="M-1 14l-2 4M6 12l-2 4" stroke="#2f7fd8" stroke-width="2.200"/>';
  if (type === 'd') s += '<path d="M-7 13l-2 4M0 13l-2 6M7 13l-2 4" stroke="#2f7fd8" stroke-width="2.200"/>';
  return `<g transform="translate(${x},${y})">${s}</g>`;
}
document.querySelectorAll('[data-chart]').forEach((el) => {
  const [name, s] = charts[el.dataset.chart];
  const XE = px(57);
  let grid = '', hours = '', bars = '', arrows = '', icons = '';
  for (let i = 0; i <= 57; i++) grid += `M${px(i)} 249V461M${px(i)} 482V610`;
  for (let i = 0; i <= 10; i++) grid += `M${X0} ${249 + i * 21.2}H${XE}`;
  for (let i = 0; i <= 6; i++) grid += `M${X0} ${482 + i * 21.3}H${XE}`;
  for (let i = 1; i <= 57; i += 2) hours += `<text x="${px(i)}" y="231" text-anchor="middle">${String((21 + i) % 24).padStart(2, '0')}</text>`;
  for (const [i, h] of Object.entries(s.rain)) bars += `<rect x="${px(+i)}" y="${461 - h}" width="22" height="${h}"/>`;
  for (let i = 0; i <= 56; i += 2) {
    const a = i < 2 ? 8 : i < 5 ? 18 : i > 53 && s === seriesA ? 72 : 28 + Math.min(10, i / 5);
    arrows += `<g transform="translate(${px(i)},625) rotate(${a})"><path d="M0 11V-3" stroke="#222" stroke-width="2.600"/><path d="M0 -12L6 0L0 -3L-6 0z" fill="#111"/></g>`;
  }
  [...s.sky].forEach((t, k) => { icons += sky(t, px(2 + 2 * k), s.skyY[k]); });
  const axis = (x, anchor, list, y0, dy) => list.map((t, i) => `<text x="${x}" y="${y0 + i * dy}" text-anchor="${anchor}">${t}</text>`).join('');
  el.innerHTML = `<svg width="460" height="230" viewBox="12 15 1380 690" font-family="Liberation Sans, Arial, sans-serif">
    <circle cx="66" cy="69" r="27" fill="#00b9f1"/><text x="66" y="79" font-size="27" font-weight="bold" fill="#fff" text-anchor="middle" textLength="38" lengthAdjust="spacingAndGlyphs">ЧR</text>
    <text x="989" y="77" font-size="23" fill="#56616c">Served by</text>
    <text x="1112" y="82" font-size="34" font-weight="bold" fill="#000" stroke="#000" stroke-width="2.500" textLength="70" lengthAdjust="spacingAndGlyphs">NRK</text>
    <circle cx="1217" cy="62" r="12" fill="none" stroke="#222" stroke-width="2"/><path d="M1205 87q4-5 8 0t8 0t8 0" fill="none" stroke="#222" stroke-width="2"/>
    <g font-size="16" font-weight="bold" fill="#222"><text x="1241" y="68" textLength="108">Meteorologisk</text><text x="1241" y="83" textLength="62">Institutt</text></g>
    <text x="41" y="150" font-size="36.800" fill="#21292b">Weather forecast for ${name}</text>
    <g font-size="26.300" fill="#21292b"><text x="132" y="194">Wed. 29 Dec.</text><text x="669" y="194">Thur. 30 Dec.</text></g>
    <g font-size="23.500" fill="#6e7480">${hours}
      ${axis(57, 'end', ['12°', '8°', '4°', '0°', '-4°'], 300, 42.3)}${axis(1348, 'start', [8, 6, 4, 2, 0], 300, 42.3)}${axis(57, 'end', [8, 4, 0], 533, 42.5)}</g>
    <rect x="42" y="241" width="7" height="17" rx="3" fill="#555"/>
    <path d="M1350 249a8.500 8 0 0 1 17 0zM1358 249v9q2 4 5 0" fill="none" stroke="#555" stroke-width="2.500"/>
    <path d="M36 480h14q5-4 0-5M36 485h17M38 490h10" fill="none" stroke="#666" stroke-width="2.500"/>
    <path d="${grid}" stroke="#d2dae0" stroke-width="2.400" fill="none"/>
    <path d="M${X0} 418.500H${XE}" stroke="#fff" stroke-width="3"/><path d="M${X0} 418.500H${XE}" stroke="#c0c4c8" stroke-width="2.500" stroke-dasharray="9 6"/>
    <path d="M${px(3)} 249V461M${px(3)} 482V610M${px(27)} 249V461M${px(27)} 482V610M${px(51)} 249V461M${px(51)} 482V610" stroke="#9b9ea6" stroke-width="3.500"/>
    <g fill="#006edb">${bars}</g>${icons}
    <path d="${smooth(s.temp)}" fill="none" stroke="#c60000" stroke-width="4"/>
    <path d="${smooth(s.wind)}" fill="none" stroke="#aa00f2" stroke-width="4"/>
    ${arrows}
    <rect x="64" y="665" width="20" height="6" fill="#c33"/><rect x="64" y="671" width="20" height="6" fill="#4a9bea"/>
    <rect x="287" y="661" width="19" height="19" fill="#006edb"/><rect x="519" y="668" width="21" height="4" fill="#aa00f2"/>
    <g font-size="23" fill="#666b7c"><text x="91" y="678">Temperature °C</text><text x="312" y="678">Precipitation mm</text><text x="546" y="678">Wind m/s</text></g>
  </svg>`;
});
```
